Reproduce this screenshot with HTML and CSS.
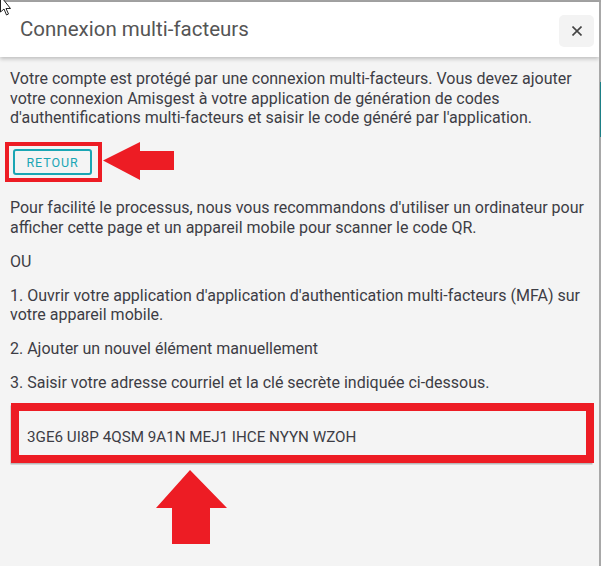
FILE: index.html
```html
<!DOCTYPE html>
<html lang="fr">
<head>
<meta charset="utf-8">
<title>Connexion multi-facteurs</title>
<link rel="stylesheet" href="styles.css">
</head>
<body>
<div class="frame">
  <div class="dialog">
    <header class="dialog-header">
      <h1 class="dialog-title">Connexion multi-facteurs</h1>
      <button class="close-btn" aria-label="Fermer">
        <svg width="10" height="10" viewBox="0 0 10 10"><path d="M0.5 0.5L9.5 9.5M9.5 0.5L0.5 9.5" stroke="#444" stroke-width="1.6" fill="none"/></svg>
      </button>
    </header>
    <div class="dialog-body">
      <p class="para">Votre compte est protégé par une connexion multi-facteurs. Vous devez ajouter votre connexion Amisgest à votre application de génération de codes d'authentifications multi-facteurs et saisir le code généré par l'application.</p>
      <div class="back-row">
        <div class="highlight">
          <button class="back-btn">RETOUR</button>
        </div>
        <svg class="arrow-left" width="72" height="38" viewBox="0 0 72 38"><path d="M0 18.5L37 0V9H71V28H37V38Z" fill="#ed1c24"/></svg>
      </div>
      <p class="para">Pour facilité le processus, nous vous recommandons d'utiliser un ordinateur pour afficher cette page et un appareil mobile pour scanner le code QR.</p>
      <p class="para">OU</p>
      <p class="para">1. Ouvrir votre application d'application d'authentication multi-facteurs (MFA) sur votre appareil mobile.</p>
      <p class="para">2. Ajouter un nouvel élément manuellement</p>
      <p class="para">3. Saisir votre adresse courriel et la clé secrète indiquée ci-dessous.</p>
      <div class="secret-wrap">
        <div class="secret">3GE6 UI8P 4QSM 9A1N MEJ1 IHCE NYYN WZOH</div>
        <svg class="arrow-up" width="72" height="75" viewBox="0 0 72 75"><path d="M34 0L71 38H54V74H16V38H0Z" fill="#ed1c24"/></svg>
      </div>
    </div>
  </div>
  <div class="edge"><span class="edge-accent"></span></div>
  <svg class="cursor" width="14" height="20" viewBox="0 0 14 20"><path d="M0.5 -4L0.5 12L4 9L6.5 15L8.5 14L6 8.5H10.5Z" fill="#fff" stroke="#222" stroke-width="1"/></svg>
</div>
</body>
</html>
```

FILE: styles.css
```css
* { box-sizing: border-box; }
html, body { margin: 0; padding: 0; }
body {
  width: 601px;
  height: 566px;
  overflow: hidden;
  background: #f4f4f4;
  font-family: Roboto, "Liberation Sans", sans-serif;
}
.frame {
  position: relative;
  display: flex;
  height: 566px;
  border-top: 2px solid #a3a3a3;
}
.dialog {
  width: 599px;
  background: #f4f4f4;
}
.edge {
  width: 2px;
  background: #a8a8a8;
  position: relative;
}
.edge-accent {
  position: absolute;
  left: 1px;
  top: 80px;
  width: 1px;
  height: 55px;
  background: #1b7f86;
}
.dialog-header {
  height: 55px;
  background: #fff;
  display: flex;
  align-items: center;
  justify-content: space-between;
  padding: 0 5px 0 20px;
  box-shadow: 0 2px 4px rgba(0,0,0,0.22);
  position: relative;
}
.dialog-title {
  margin: 0;
  font-size: 20.5px;
  font-weight: 400;
  color: #555;
  padding-bottom: 1px;
}
.close-btn {
  width: 35px;
  height: 32px;
  border: none;
  border-radius: 5px;
  background: #f3f3f3;
  display: flex;
  align-items: center;
  justify-content: center;
  padding: 0;
  margin-top: 3px;
}
.dialog-body {
  padding: 12px 0 0 10px;
  position: relative;
}
.para {
  margin: 0 0 14.5px;
  font-size: 16px;
  line-height: 19.5px;
  color: #3d3d45;
  padding-right: 8px;
}
.back-row {
  display: flex;
  align-items: flex-start;
  margin: 3px 0 16px -5px;
  height: 40px;
}
.highlight {
  border: 4px solid #ed1c24;
  padding: 3px 6px 3px 4px;
}
.back-btn {
  font-family: Roboto, "Liberation Sans", sans-serif;
  height: 26px;
  width: 79px;
  border: 2px solid #1aa6b4;
  border-radius: 3px;
  background: #f4f4f4;
  color: #1aa6b4;
  font-size: 12.5px;
  letter-spacing: 0.9px;
  padding: 1px 0 0;
}
.arrow-left {
  margin-left: 1px;
  display: block;
}
.secret-wrap {
  position: relative;
  margin: -4px 0 0 1px;
  width: 583px;
}
.secret {
  border: 8px solid #ed1c24;
  height: 60px;
  padding: 17px 0 0 8px;
  font-size: 15.2px;
  line-height: 19.5px;
  color: #3d3d45;
  box-shadow: -1px 2px 0 -0.5px #b8b8b8;
}
.arrow-up {
  display: block;
  margin: 7px 0 0 145px;
}
.cursor {
  position: absolute;
  left: 0;
  top: -2px;
}
```
